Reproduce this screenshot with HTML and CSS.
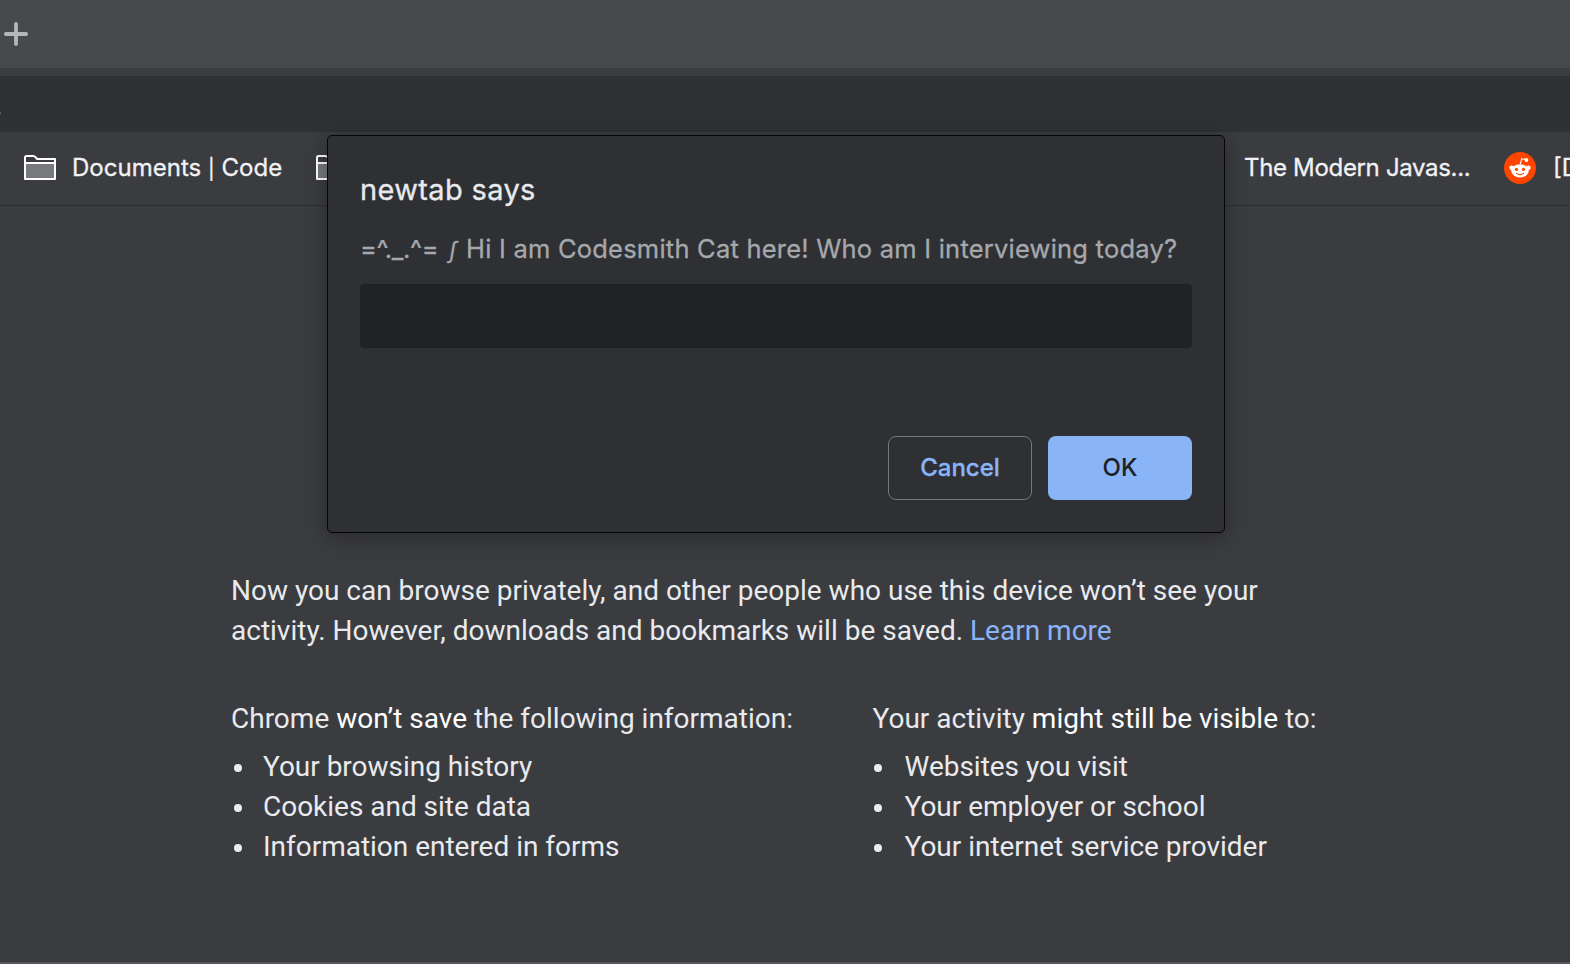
FILE: index.html
```html
<!DOCTYPE html>
<html lang="en">
<head>
<meta charset="utf-8">
<title>New Incognito Tab</title>
<link rel="stylesheet" href="styles.css">
</head>
<body>
<div class="browser">
  <header class="tabstrip">
    <svg class="plus" width="24" height="24" viewBox="0 0 24 24"><path d="M12 1.9V22.1M1.9 12H22.1" stroke="#b4b6b8" stroke-width="3.8" stroke-linecap="round"/></svg>
  </header>
  <div class="toolbar"><span class="speck"></span></div>
  <nav class="bookmarks">
    <svg class="folder" width="32" height="25" viewBox="0 0 32 25"><path d="M2 8H30V23H2Z" fill="#77797c"/><path d="M1 8H31M1 2.5Q1 1 2.5 1H9.5Q10.5 1 11.5 2.2L13.2 4H31V24H1Z" fill="none" stroke="#fff" stroke-width="2" stroke-linejoin="round"/></svg>
    <span class="bookmark bookmark-docs">Documents <span class="pipe">|</span> Code</span>
    <svg class="folder" width="32" height="25" viewBox="0 0 32 25"><path d="M2 8H30V23H2Z" fill="#77797c"/><path d="M1 8H31M1 2.5Q1 1 2.5 1H9.5Q10.5 1 11.5 2.2L13.2 4H31V24H1Z" fill="none" stroke="#fff" stroke-width="2" stroke-linejoin="round"/></svg>
    <span class="bookmark bookmark-js">The Modern Javas...</span>
    <svg class="reddit" width="32" height="32" viewBox="0 0 32 32"><circle cx="16" cy="16" r="16" fill="#ff4500"/><g fill="#fff"><ellipse cx="16" cy="18.8" rx="8.8" ry="6.6"/><circle cx="7.6" cy="15.8" r="2.3"/><circle cx="24.4" cy="15.8" r="2.3"/><circle cx="22.4" cy="8" r="1.9"/></g><path d="M16.4 12L17.6 6.7L22 7.8" fill="none" stroke="#fff" stroke-width="1.1"/><circle cx="12.5" cy="17.4" r="1.6" fill="#ff4500"/><circle cx="19.5" cy="17.4" r="1.6" fill="#ff4500"/><path d="M12.5 21.4Q16 23.8 19.5 21.4" fill="none" stroke="#ff4500" stroke-width="1.1" stroke-linecap="round"/></svg>
    <span class="bookmark bookmark-cut">[D</span>
  </nav>
  <main class="page">
    <p class="intro">Now you can browse privately, and other people who use this device won’t see your<br>activity. However, downloads and bookmarks will be saved. <a class="learn">Learn more</a></p>
    <div class="columns">
      <section>
        <p class="lead">Chrome <em>won’t save</em> the following information:</p>
        <ul class="list"><li>Your browsing history</li><li>Cookies and site data</li><li>Information entered in forms</li></ul>
      </section>
      <section>
        <p class="lead">Your activity <em>might still be visible</em> to:</p>
        <ul class="list list-visible"><li>Websites you visit</li><li>Your employer or school</li><li>Your internet service provider</li></ul>
      </section>
    </div>
  </main>
  <div class="dialog">
    <div class="title">newtab says</div>
    <div class="message"><span class="cat">=^._.^= <i class="tail">∫</i></span><span class="ask">Hi I am Codesmith Cat here! Who am I interviewing today?</span></div>
    <input class="field" type="text" aria-label="Name">
    <div class="actions">
      <button class="btn cancel">Cancel</button>
      <button class="btn ok">OK</button>
    </div>
  </div>
</div>
</body>
</html>
```
FILE: styles.css
```css
* { box-sizing: border-box; }
body { margin: 0; background: #3b3c40; }
.browser {
  position: relative;
  display: flex;
  flex-direction: column;
  width: 1570px;
  height: 964px;
  overflow: hidden;
  background: #3b3c40;
  border-bottom: 2px solid #57585c;
}
.tabstrip {
  flex: none;
  height: 76px;
  padding: 22px 0 0 4px;
  background: #48494b;
  border-bottom: 8px solid #3c3d41;
}
.plus { display: block; }
.toolbar { flex: none; height: 56px; padding-top: 36px; background: #2f3235; }
.speck { display: block; width: 1px; height: 2px; background: #5b5e61; }
.bookmarks {
  flex: none;
  display: flex;
  align-items: center;
  height: 74px;
  padding: 0 0 2px 24px;
  border-bottom: 1px solid #2d2e31;
  color: #f1f2f4;
  font: 24px/32px Inter, sans-serif;
  -webkit-text-stroke: 0.3px;
  white-space: pre;
}
.folder, .reddit { flex: none; }
.bookmark { flex: none; }
.bookmark-docs { width: 244px; margin-left: 16px; letter-spacing: 0.02px; }
.pipe { font-size: 20px; line-height: 1; }
.bookmark-js { width: 260px; margin-left: 896px; letter-spacing: -0.33px; }
.bookmark-cut { margin-left: 17px; }
.page {
  padding: 365px 0 0 231px;
  color: #e8eaed;
  font: 28px/40px Roboto, sans-serif;
  white-space: nowrap;
}
.intro, .lead { margin: 0; }
.learn { color: #8ab4f8; }
.columns { display: flex; margin-top: 48px; }
.columns section { width: 641.5px; }
.lead em { font-style: normal; color: #fff; }
.list { list-style: none; margin: 8px 0 0; padding: 0; letter-spacing: -0.02px; }
.list li { display: flex; align-items: center; }
.list li::before {
  content: "";
  width: 8px;
  height: 8px;
  margin: 2px 21px 0 3px;
  border-radius: 50%;
  background: #e8eaed;
}
.list-visible li::before { margin: 2px 22.5px 0 1.5px; }
.dialog {
  position: absolute;
  left: 327px;
  top: 135px;
  width: 898px;
  height: 398px;
  padding: 32px;
  border: 1px solid #050506;
  border-radius: 5px;
  background: #2f3034;
  box-shadow: 0 4px 22px rgba(0, 0, 0, .32);
  font-family: Inter, sans-serif;
  white-space: nowrap;
}
.title {
  height: 44px;
  font-size: 29px;
  line-height: 44px;
  letter-spacing: 0.35px;
  color: #e8eaed;
  -webkit-text-stroke: 0.3px;
}
.message {
  display: flex;
  height: 72px;
  padding-top: 17px;
  font-size: 25.5px;
  line-height: 40px;
  color: #a5a8ac;
  -webkit-text-stroke: 0.3px;
}
.cat { width: 106px; letter-spacing: -0.35px; }
.tail { margin-left: 4px; font-size: 22px; line-height: 1; }
.ask { letter-spacing: 0.22px; }
.field {
  display: block;
  width: 832px;
  height: 64px;
  padding: 0 16px;
  border: 0;
  border-radius: 4px;
  background: #202123;
  color: #e8eaed;
  font: 26px Inter, sans-serif;
}
.actions { display: flex; justify-content: flex-end; gap: 16px; margin-top: 88px; }
.btn {
  width: 144px;
  height: 64px;
  padding: 0 0 2px;
  border-radius: 8px;
  font: 500 24px Inter, sans-serif;
}
.cancel { border: 1px solid #75777b; background: transparent; color: #8ab4f8; -webkit-text-stroke: 0.3px; }
.ok { border: 0; background: #8ab4f8; color: #202124; }
```
